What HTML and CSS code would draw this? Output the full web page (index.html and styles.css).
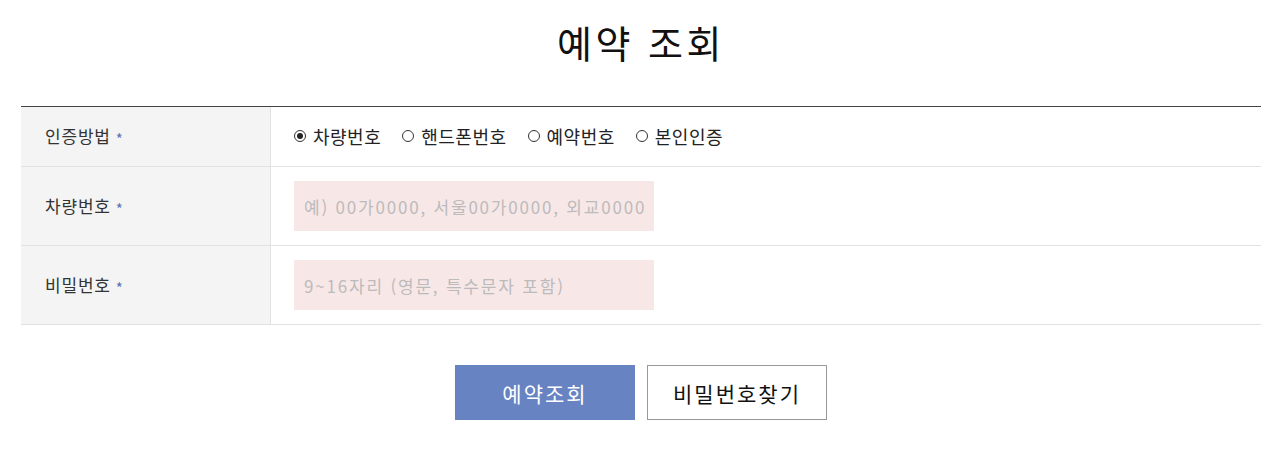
FILE: index.html
```html
<!DOCTYPE html>
<html lang="ko">
<head>
<meta charset="utf-8">
<title>예약 조회</title>
<link rel="stylesheet" href="styles.css">
</head>
<body>
<div class="page">
  <h1 class="title">예약 조회</h1>
  <div class="form">
    <div class="row row-radio">
      <div class="label">인증방법<span class="req">*</span></div>
      <div class="field">
        <label class="radio"><span class="dot checked"></span>차량번호</label>
        <label class="radio"><span class="dot"></span>핸드폰번호</label>
        <label class="radio"><span class="dot"></span>예약번호</label>
        <label class="radio"><span class="dot"></span>본인인증</label>
      </div>
    </div>
    <div class="row">
      <div class="label">차량번호<span class="req">*</span></div>
      <div class="field">
        <input class="input" type="text" placeholder="예) 00가0000, 서울00가0000, 외교000000">
      </div>
    </div>
    <div class="row">
      <div class="label">비밀번호<span class="req">*</span></div>
      <div class="field">
        <input class="input" type="text" placeholder="9~16자리 (영문, 특수문자 포함)">
      </div>
    </div>
  </div>
  <div class="buttons">
    <button class="btn btn-primary">예약조회</button>
    <button class="btn btn-outline">비밀번호찾기</button>
  </div>
</div>
</body>
</html>
```

FILE: styles.css
```css
* { box-sizing: border-box; }
html, body { margin: 0; padding: 0; background: #fff; }
body {
  font-family: "Noto Sans CJK KR", "Noto Sans", sans-serif;
  color: #222;
}
.page {
  width: 1240px;
  margin-left: 21px;
}
.title {
  margin: 0;
  padding-top: 16px;
  height: 106px;
  text-align: center;
  font-size: 38px;
  font-weight: 400;
  line-height: 52px;
  letter-spacing: 3.5px;
  color: #111;
}
.form {
  border-top: 1px solid #444;
}
.row {
  display: grid;
  grid-template-columns: 250px 1fr;
  border-bottom: 1px solid #e2e2e2;
  height: 79px;
}
.row-radio { height: 60px; }
.label {
  background: #f4f4f4;
  border-right: 1px solid #e2e2e2;
  display: flex;
  align-items: center;
  padding-left: 24px;
  padding-bottom: 2px;
  font-size: 17px;
  letter-spacing: 0.8px;
  color: #333;
}
.req {
  color: #5a72b5;
  margin-left: 5px;
  font-size: 15px;
  transform: translateY(3px);
}
.field {
  display: flex;
  align-items: center;
  padding-left: 23px;
}
.row-radio .field { padding-bottom: 2px; }
.radio {
  display: flex;
  align-items: center;
  font-size: 18px;
  letter-spacing: 0.5px;
  color: #222;
  margin-right: 21px;
}
.dot {
  width: 12px;
  height: 12px;
  border: 1px solid #333;
  border-radius: 50%;
  margin-right: 7px;
  position: relative;
}
.dot.checked::after {
  content: "";
  position: absolute;
  left: 2px;
  top: 2px;
  width: 6px;
  height: 6px;
  border-radius: 50%;
  background: #222;
}
.input {
  width: 360px;
  height: 50px;
  border: none;
  background: #f8e7e7;
  padding: 0 10px;
  font-family: "Noto Sans CJK KR", "Noto Sans", sans-serif;
  font-size: 17px;
  letter-spacing: 1.8px;
  color: #333;
  outline: none;
}
.input::placeholder { color: #bbbbbb; }
.buttons {
  display: flex;
  justify-content: center;
  gap: 12px;
  margin-top: 40px;
}
.btn {
  width: 180px;
  height: 55px;
  font-family: "Noto Sans CJK KR", "Noto Sans", sans-serif;
  font-size: 21px;
  letter-spacing: 2px;
  cursor: pointer;
}
.btn-primary {
  background: #6783c1;
  border: none;
  color: #fff;
}
.btn-outline {
  background: #fff;
  border: 1px solid #999;
  color: #111;
}
```
